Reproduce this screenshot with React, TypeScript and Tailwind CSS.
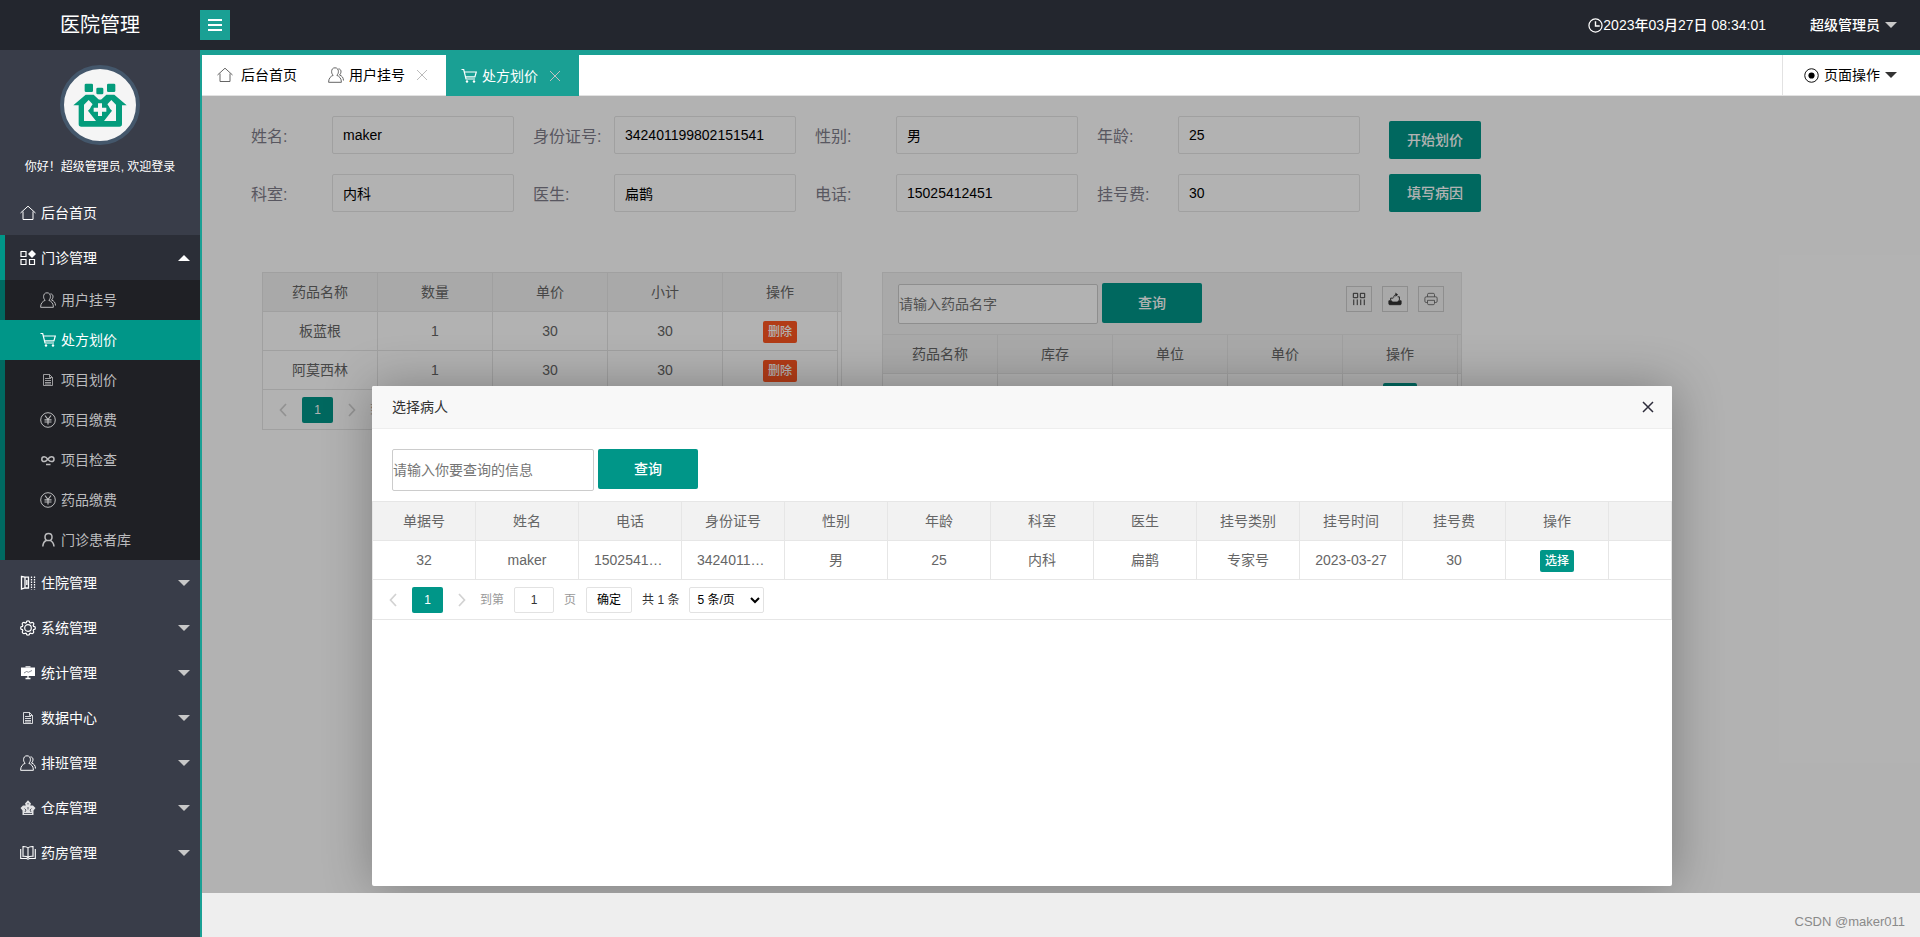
import type { ReactNode } from 'react'
import clsx from 'clsx'

type IconName =
  | 'home'
  | 'grid'
  | 'users'
  | 'cart'
  | 'file'
  | 'yen'
  | 'infinity'
  | 'user'
  | 'ward'
  | 'gear'
  | 'board'
  | 'store'
  | 'book'
  | 'clock'
  | 'radio'
  | 'columns'
  | 'export'
  | 'print'

const ICONS: Record<IconName, ReactNode> = {
  home: <path d="M.5 8 8 1.200 15.500 8M3 6.500v8h10v-8" />,
  grid: (
    <>
      <path d="M1 1.500h5v5H1zM1 9.500h5v5H1zM9.500 9.500h5v5h-5z" strokeWidth="1.200" />
      <path d="M12 0 16 4 12 8 8 4z" fill="currentColor" stroke="none" />
    </>
  ),
  users: (
    <>
      <path d="M7 .8C4.500.8 3.600 2.600 3.600 4.700c0 1.700.7 2.800 1.600 3.600C2.600 9.300.6 11.300.6 15.300h12.800c0-4-2-6-4.600-7 .9-.8 1.600-1.900 1.600-3.600C10.400 2.600 9.500.8 7 .8z" />
      <path d="M10.500 1.800c1.900.2 2.700 1.500 2.500 3.300-.1 1.300-.8 2.200-1.500 2.900 2.500.8 3.900 2.600 4 5.500" />
    </>
  ),
  cart: (
    <>
      <path d="M.5 1.500h2.200L5 11h9M3.200 4h12.100l-1.400 4.800H4.600" strokeWidth="1.200" />
      <circle cx="6" cy="13.500" r="1.200" fill="currentColor" stroke="none" />
      <circle cx="13" cy="13.500" r="1.200" fill="currentColor" stroke="none" />
    </>
  ),
  file: <path d="M3.500 2.500h6l3 3v8h-9zM9.500 2.500v3h3M5 6.500h6M5 8.500h6M5 10.500h6M5 12h6" strokeWidth=".8" />,
  yen: (
    <>
      <circle cx="8" cy="8" r="7.300" />
      <path d="m5 3.500 3 4 3-4M8 7.500v5M4.500 7.800h7M4.500 10h7" strokeWidth="1.200" />
    </>
  ),
  infinity: (
    <path
      d="M8 7.500C6.500 5.500 5.500 4.800 4.200 4.800a2.400 2.400 0 1 0 0 4.800c1.500 0 2.600-1.100 3.800-2.600 1.200-1.500 2-2.200 3.600-2.200a2.400 2.400 0 1 1 0 4.800C10.300 9.600 9.300 9 8 7.500zM6 12.500h4.500"
      strokeWidth="1.500"
    />
  ),
  user: (
    <path
      d="M8.500 1.500c-2.300 0-3.500 1.600-3.500 3.500S6.200 8.600 8.500 8.600 12 7 12 5s-1.200-3.500-3.500-3.500zM6.500 8.300C4 9.500 3 11.500 2.800 14.500M10.300 8.300c2.400 1.200 3.500 3.200 3.700 6.200"
      strokeWidth="1.500"
    />
  ),
  ward: (
    <>
      <path d="M1.500 1.500 5 2.200h3.500V13H5l-3.500 1.200zM5 2.200V13M6.800 5v5" strokeWidth="1.300" />
      <path d="M11.500 1.500v13M14.500 1.500v13" strokeWidth="1.300" strokeDasharray="1.500 1" />
    </>
  ),
  gear: (
    <>
      <circle cx="8" cy="8" r="3.300" strokeWidth="1.200" />
      <path
        d="M6.300 2.600C6.300 1.300 7 .8 8 .8s1.700.5 1.700 1.800l1 .4c1-.9 1.800-.8 2.500-.2s.9 1.500 0 2.500l.4 1c1.300 0 1.800.7 1.800 1.700s-.5 1.700-1.800 1.700l-.4 1c.9 1 .7 1.800 0 2.500s-1.500.8-2.500-.1l-1 .4c0 1.200-.7 1.700-1.700 1.700s-1.700-.5-1.700-1.700l-1-.4c-1 .9-1.800.8-2.500.1s-.9-1.500 0-2.500l-.4-1C1.100 9.700.6 9 .6 8s.5-1.700 1.800-1.700l.4-1c-.9-1-.7-1.900 0-2.500s1.500-.7 2.500.2z"
        strokeWidth="1.200"
      />
    </>
  ),
  board: (
    <>
      <path d="M1 2.500h14v8.500H1z" fill="currentColor" stroke="none" />
      <path d="M5.500 1.800h5M8 11v3M5.500 13.500h5" strokeWidth="1.300" />
      <path d="m4 8 2.500-1.500 2 .7L12 5.500" className="stroke-[#393d49]" strokeWidth=".6" />
    </>
  ),
  store: (
    <>
      <path d="M8 .3 11 3.500 10.200 5.500H13L15.500 8 13.500 10.500V15h-11v-4.500L.5 8 3 5.500h2.800L5 3.500z" fill="currentColor" stroke="none" fillOpacity=".85" />
      <path d="M8 3v1.500M4.500 8.500 6 10l-1 2M11.500 8.500 10 10l1 2M8 7v2.500M4 13.500h8" className="stroke-[#393d49]" strokeWidth=".8" />
    </>
  ),
  book: (
    <path d="M8 3C7 1.800 5.500 1.500 3.500 1.500H3v9.800c2.500-.3 4 .3 5 1.200 1-.9 2.500-1.500 5-1.200V1.500h-.5C10.500 1.500 9 1.800 8 3zM8 3v9.500M.7 4v9.500H6.500L8 14.200l1.500-.7h5.800V4" strokeWidth="1.100" />
  ),
  clock: (
    <>
      <circle cx="8" cy="8" r="7" strokeWidth="1.300" />
      <path d="M8 3.500v5h4.500" strokeWidth="1.500" />
    </>
  ),
  radio: (
    <>
      <circle cx="8" cy="8" r="7.200" />
      <circle cx="8" cy="8" r="3.300" fill="currentColor" stroke="none" />
    </>
  ),
  columns: <path d="M1.500 1.500h5v5h-5zM9.500 1.500h5v5h-5zM2 8.500V15M6 8.500V15M10 8.500V15M14 8.500V15" strokeWidth="1.100" />,
  export: (
    <>
      <path d="M1 10h3l1 1.500h6L12 10h3v3.500a1 1 0 0 1-1 1H2a1 1 0 0 1-1-1z" fill="currentColor" />
      <path d="M3 9.500V7h3M13 9.500V5.500h-2M6.500 6.500C6.500 4 8 3 9.500 3" strokeWidth="1.100" />
      <path d="M8.500.5 11.500 3l-3 2.500z" fill="currentColor" stroke="none" />
    </>
  ),
  print: (
    <path d="M4 5.500V3a1.500 1.500 0 0 1 1.500-1.500h5A1.500 1.500 0 0 1 12 3v2.500M4 12H2.500A1.500 1.500 0 0 1 1 10.500V7a1.500 1.500 0 0 1 1.500-1.500h11A1.500 1.500 0 0 1 15 7v3.500a1.500 1.500 0 0 1-1.500 1.500H12M4 9.500h8V13a1.500 1.500 0 0 1-1.500 1.500h-5A1.500 1.500 0 0 1 4 13z" />
  ),
}

function Icon({ name, className = 'size-4' }: { name: IconName; className?: string }) {
  return (
    <svg
      viewBox="0 0 16 16"
      fill="none"
      stroke="currentColor"
      strokeWidth="1"
      aria-hidden="true"
      className={clsx('shrink-0', className)}
    >
      {ICONS[name]}
    </svg>
  )
}

function Caret({ up = false, className }: { up?: boolean; className?: string }) {
  return (
    <svg viewBox="0 0 12 6" fill="currentColor" aria-hidden="true" className={clsx('h-[6px] w-3 shrink-0', className)}>
      <path d={up ? 'M0 6 6 0l6 6z' : 'M0 0h12L6 6z'} />
    </svg>
  )
}

function Cross({ className }: { className?: string }) {
  return (
    <svg viewBox="0 0 12 12" fill="none" stroke="currentColor" aria-hidden="true" className={clsx('size-3 shrink-0', className)}>
      <path d="m1 1 10 10M11 1 1 11" />
    </svg>
  )
}

function HospitalLogo() {
  return (
    <svg viewBox="27 27 216 216" aria-hidden="true" className="size-full">
      <g fill="#049c7c">
        <rect x="89" y="71" width="25" height="25" rx="4" />
        <rect x="124" y="83" width="21" height="20" rx="4" />
        <rect x="156" y="71" width="25" height="25" rx="4" />
        <path d="M55 136 92 104h24l19 18 19-18h24l37 32h-14v56q0 8-8 8H79q-8 0-8-8v-56z" />
      </g>
      <path d="m101 120 12 13v5l-14 14 24 31H87v-49zM169 120l-12 13v5l14 14-24 31h36v-49z" fill="#f5f5f5" />
      <path
        d="M123 128q12-12 24 0v8h8q12 13 0 26h-8v8q-12 12-24 0v-8h-8q-12-13 0-26h8z"
        fill="#049c7c"
        stroke="#049c7c"
        strokeWidth="7"
      />
      <path d="M135 130v38M116 149h38" stroke="#f5f5f5" strokeWidth="12" />
    </svg>
  )
}

const SUB_MENU: { label: string; icon: IconName; active?: boolean }[] = [
  { label: '用户挂号', icon: 'users' },
  { label: '处方划价', icon: 'cart', active: true },
  { label: '项目划价', icon: 'file' },
  { label: '项目缴费', icon: 'yen' },
  { label: '项目检查', icon: 'infinity' },
  { label: '药品缴费', icon: 'yen' },
  { label: '门诊患者库', icon: 'user' },
]

const MENU: { label: string; icon: IconName }[] = [
  { label: '住院管理', icon: 'ward' },
  { label: '系统管理', icon: 'gear' },
  { label: '统计管理', icon: 'board' },
  { label: '数据中心', icon: 'file' },
  { label: '排班管理', icon: 'users' },
  { label: '仓库管理', icon: 'store' },
  { label: '药房管理', icon: 'book' },
]

function Header() {
  return (
    <header className="flex h-[50px] shrink-0 items-center bg-[#23262e] text-sm text-white">
      <h1 className="w-[200px] text-center text-xl">医院管理</h1>
      <button type="button" aria-label="收起菜单" className="flex size-[30px] flex-col items-center justify-center gap-[3px] bg-[#1aa094]">
        <span className="h-[2px] w-[14px] bg-white" />
        <span className="h-[2px] w-[14px] bg-white" />
        <span className="h-[2px] w-[14px] bg-white" />
      </button>
      <div className="ml-auto flex items-center pr-[23px]">
        <Icon name="clock" className="size-[15px]" />
        <time className="font-medium">2023年03月27日 08:34:01</time>
        <button type="button" className="ml-11 flex items-center gap-[5px] font-medium">
          超级管理员
          <Caret className="text-[#c8c8c8]" />
        </button>
      </div>
    </header>
  )
}

function Sidebar() {
  return (
    <aside className="w-[200px] shrink-0 bg-[#393d49] text-sm text-white">
      <div className="flex flex-col items-center pt-[15px]">
        <div className="size-20 overflow-hidden rounded-full border-4 border-[#44576b] bg-[#f5f5f5]">
          <HospitalLogo />
        </div>
        <p className="mt-[13px] text-xs leading-[18px]">你好！超级管理员, 欢迎登录</p>
      </div>
      <nav className="mt-[14px]">
        <a href="#home" className="flex h-[45px] items-center gap-[5px] pl-5">
          <Icon name="home" />
          后台首页
        </a>
        <button type="button" className="flex h-[45px] w-full items-center gap-[5px] border-l-5 border-[#009688] bg-[#2b2e37] pr-[10px] pl-[15px]">
          <Icon name="grid" />
          门诊管理
          <Caret up className="ml-auto" />
        </button>
        <ul className="bg-[#1f2025] text-[#bcbcbe]">
          {SUB_MENU.map((item) => (
            <li key={item.label}>
              <a
                href="#menu"
                className={clsx(
                  'flex h-10 items-center gap-[5px] border-l-5 pl-[35px]',
                  item.active ? 'border-[#009688] bg-[#009688] text-white' : 'border-[#006961]',
                )}
              >
                <Icon name={item.icon} />
                {item.label}
              </a>
            </li>
          ))}
        </ul>
        {MENU.map((item) => (
          <button key={item.label} type="button" className="flex h-[45px] w-full items-center gap-[5px] pr-[10px] pl-5">
            <Icon name={item.icon} />
            {item.label}
            <Caret className="ml-auto text-[#c8c8c8]" />
          </button>
        ))}
      </nav>
    </aside>
  )
}

function TabBar() {
  return (
    <div className="flex h-[41px] shrink-0 border-b border-[#e2e2e2] bg-white text-sm text-black">
      <button type="button" className="flex items-center gap-2 px-[15px]">
        <Icon name="home" className="size-4 text-[#666]" />
        后台首页
      </button>
      <button type="button" className="flex items-center gap-[5px] pr-[18px] pl-4">
        <Icon name="users" className="size-4 text-[#666]" />
        用户挂号
        <Cross className="ml-[6px] text-[#bbb]" />
      </button>
      <button type="button" className="-mb-px flex items-center gap-[5px] bg-[#1aa094] pr-[18px] pl-[15px] text-white">
        <Icon name="cart" />
        处方划价
        <Cross className="ml-[6px] text-[#c2c2c2]" />
      </button>
      <button type="button" className="ml-auto flex items-center gap-[5px] border-l border-[#e2e2e2] pr-[23px] pl-[21px]">
        <Icon name="radio" className="size-[15px]" />
        页面操作
        <Caret className="text-[#333]" />
      </button>
    </div>
  )
}

const FIELDS = [
  { id: 'name', label: '姓名:', value: 'maker' },
  { id: 'id-card', label: '身份证号:', value: '342401199802151541' },
  { id: 'gender', label: '性别:', value: '男' },
  { id: 'age', label: '年龄:', value: '25' },
  { id: 'dept', label: '科室:', value: '内科' },
  { id: 'doctor', label: '医生:', value: '扁鹊' },
  { id: 'phone', label: '电话:', value: '15025412451' },
  { id: 'fee', label: '挂号费:', value: '30' },
]

function PatientForm() {
  return (
    <form className="flex pl-[49px]">
      <div className="grid grid-cols-[repeat(4,282px)] gap-y-5">
        {FIELDS.map((field) => (
          <div key={field.id} className="flex items-center">
            <label htmlFor={field.id} className="w-[81px] pt-[3px] text-base whitespace-nowrap text-[#7f7d8a]">
              {field.label}
            </label>
            <input
              id={field.id}
              defaultValue={field.value}
              className="h-[38px] w-[182px] rounded-xs border border-[#e6e6e6] bg-white px-[10px] text-sm text-black"
            />
          </div>
        ))}
      </div>
      <div className="ml-[10px] flex flex-col gap-[15px] pt-[5px]">
        <button type="button" className="h-[38px] w-[92px] rounded-xs bg-[#009688] text-sm font-medium text-white">
          开始划价
        </button>
        <button type="button" className="h-[38px] w-[92px] rounded-xs bg-[#009688] text-sm font-medium text-white">
          填写病因
        </button>
      </div>
    </form>
  )
}

function RowButton({ danger = false, children }: { danger?: boolean; children: ReactNode }) {
  return (
    <button
      type="button"
      className={clsx(
        'h-[22px] rounded-xs px-[5px] text-xs leading-[22px] font-medium text-white',
        danger ? 'bg-[#ff5722]' : 'bg-[#009688]',
      )}
    >
      {children}
    </button>
  )
}

function DataTable({ columns, rows, narrow = false }: { columns: string[]; rows: ReactNode[][]; narrow?: boolean }) {
  return (
    <table className="w-full table-fixed border-separate border-spacing-0 text-center text-sm text-[#666]">
      <colgroup>
        {columns.map((column) => (
          <col key={column} className={narrow ? 'w-[103px]' : 'w-[115px]'} />
        ))}
        <col />
      </colgroup>
      <thead className="bg-[#f2f2f2]">
        <tr>
          {columns.map((column) => (
            <th key={column} scope="col" className="border-r border-b border-[#e6e6e6] p-0 font-normal">
              <div className="h-[38px] leading-[38px]">{column}</div>
            </th>
          ))}
          <td className="border-b border-[#e6e6e6] p-0" />
        </tr>
      </thead>
      <tbody>
        {rows.map((row, i) => (
          <tr key={i} className="group">
            {row.map((cell, j) => (
              <td key={j} className="border-r border-b border-[#e6e6e6] p-0 group-last:border-b-0">
                <div className="h-[38px] truncate px-[15px] leading-[38px]">{cell}</div>
              </td>
            ))}
            <td className="p-0" />
          </tr>
        ))}
      </tbody>
    </table>
  )
}

function Chevron({ left = false }: { left?: boolean }) {
  return (
    <svg viewBox="0 0 8 14" fill="none" stroke="currentColor" strokeWidth="1.700" aria-hidden="true" className="h-[14px] w-2">
      <path d={left ? 'M7 1 1.500 7 7 13' : 'M1 1l5.500 6L1 13'} />
    </svg>
  )
}

function Pager({ total }: { total: number }) {
  return (
    <div className="flex h-10 items-center border-t border-[#e6e6e6] pl-4 text-xs whitespace-nowrap text-[#333]">
      <button type="button" aria-label="上一页" className="text-[#d2d2d2]">
        <Chevron left />
      </button>
      <button type="button" aria-current="page" className="ml-[15px] h-[26px] w-[31px] rounded-xs bg-[#009688] text-white">
        1
      </button>
      <button type="button" aria-label="下一页" className="ml-[15px] text-[#d2d2d2]">
        <Chevron />
      </button>
      <label className="ml-[14px] flex items-center gap-[10px] text-[#999]">
        到第
        <input
          defaultValue="1"
          className="h-[26px] w-10 rounded-xs border border-[#e2e2e2] bg-white text-center text-[#333]"
        />
        页
      </label>
      <button type="button" className="ml-[10px] h-[26px] w-[46px] rounded-xs border border-[#e2e2e2] bg-white text-black">
        确定
      </button>
      <span className="ml-[10px]">共 {total} 条</span>
      <select aria-label="每页条数" className="ml-[10px] h-[26px] w-[75px] rounded-xs border border-[#e2e2e2] bg-white pl-[3px] text-black">
        <option>5 条/页</option>
        <option>10 条/页</option>
      </select>
    </div>
  )
}

function SearchBox({ placeholder, tall = false }: { placeholder: string; tall?: boolean }) {
  return (
    <div className="flex gap-1">
      <input
        aria-label={placeholder}
        placeholder={placeholder}
        className={clsx(
          'rounded-xs border border-[#ccc] bg-white text-sm text-black placeholder:text-[#757575]',
          tall ? 'h-[42px] w-[202px]' : 'mt-px h-10 w-[200px]',
        )}
      />
      <button type="button" className="h-10 w-[100px] rounded-xs bg-[#009688] text-sm font-medium text-white">
        查询
      </button>
    </div>
  )
}

function PrescriptionTable() {
  return (
    <section className="w-[580px] border border-[#e6e6e6]">
      <DataTable
        columns={['药品名称', '数量', '单价', '小计', '操作']}
        rows={[
          ['板蓝根', '1', '30', '30', <RowButton danger>删除</RowButton>],
          ['阿莫西林', '1', '30', '30', <RowButton danger>删除</RowButton>],
        ]}
      />
      <Pager total={2} />
    </section>
  )
}

function DrugTable() {
  return (
    <section className="w-[580px] border border-[#e6e6e6]">
      <div className="flex h-[62px] items-start justify-between border-b border-[#e6e6e6] bg-[#f2f2f2] pt-[10px] pr-[17px] pl-[15px]">
        <SearchBox placeholder="请输入药品名字" />
        <div className="flex gap-[10px] pt-[3px] text-[#333]">
          {(['columns', 'export', 'print'] as const).map((name) => (
            <button
              key={name}
              type="button"
              aria-label={name}
              className={clsx(
                'flex size-[26px] items-center justify-center border border-[#ccc]',
                name === 'print' && 'text-[#666]',
              )}
            >
              <Icon name={name} className="size-[14px]" />
            </button>
          ))}
        </div>
      </div>
      <DataTable
        columns={['药品名称', '库存', '单位', '单价', '操作']}
        rows={[
          ['板蓝根', '100', '盒', '30', <RowButton>添加</RowButton>],
          ['阿莫西林', '100', '盒', '30', <RowButton>添加</RowButton>],
        ]}
      />
      <Pager total={2} />
    </section>
  )
}

function PatientDialog() {
  return (
    <div
      role="dialog"
      aria-label="选择病人"
      className="absolute top-[290px] left-[170px] h-[500px] w-[1300px] rounded-xs bg-white shadow-[1px_1px_50px_rgba(0,0,0,0.3)]"
    >
      <div className="flex h-[43px] items-center justify-between rounded-t-xs border-b border-[#eee] bg-[#f8f8f8] px-5 text-sm text-[#333]">
        <h2>选择病人</h2>
        <button type="button" aria-label="关闭" className="-mr-[2px] text-[#2e2d3c]">
          <Cross className="stroke-[1.5]" />
        </button>
      </div>
      <div className="px-5 pt-5 pb-[10px]">
        <SearchBox placeholder="请输入你要查询的信息" tall />
      </div>
      <div className="border border-[#e6e6e6]">
        <DataTable
          narrow
          columns={['单据号', '姓名', '电话', '身份证号', '性别', '年龄', '科室', '医生', '挂号类别', '挂号时间', '挂号费', '操作']}
          rows={[
            [
              '32',
              'maker',
              '15025412451',
              '342401199802151541',
              '男',
              '25',
              '内科',
              '扁鹊',
              '专家号',
              '2023-03-27',
              '30',
              <RowButton>选择</RowButton>,
            ],
          ]}
        />
        <Pager total={1} />
      </div>
    </div>
  )
}

export default function App() {
  return (
    <div className="flex min-h-screen flex-col font-['Liberation_Sans','Noto_Sans_CJK_SC',sans-serif]">
      <Header />
      <div className="flex flex-1">
        <Sidebar />
        <div className="flex min-w-0 flex-1 flex-col border-t-5 border-l-2 border-[#1aa094]">
          <TabBar />
          <main className="relative flex-1 overflow-hidden bg-white pt-5">
            <PatientForm />
            <div className="mt-[60px] flex items-start gap-10 pl-[60px]">
              <PrescriptionTable />
              <DrugTable />
            </div>
            <div className="absolute inset-0 bg-black/30" />
            <PatientDialog />
          </main>
          <footer className="flex h-11 shrink-0 items-center justify-end bg-[#eee] pt-[14px] pr-[15px] text-[13px] text-[#8a8a8a]">
            CSDN @maker011
          </footer>
        </div>
      </div>
    </div>
  )
}
